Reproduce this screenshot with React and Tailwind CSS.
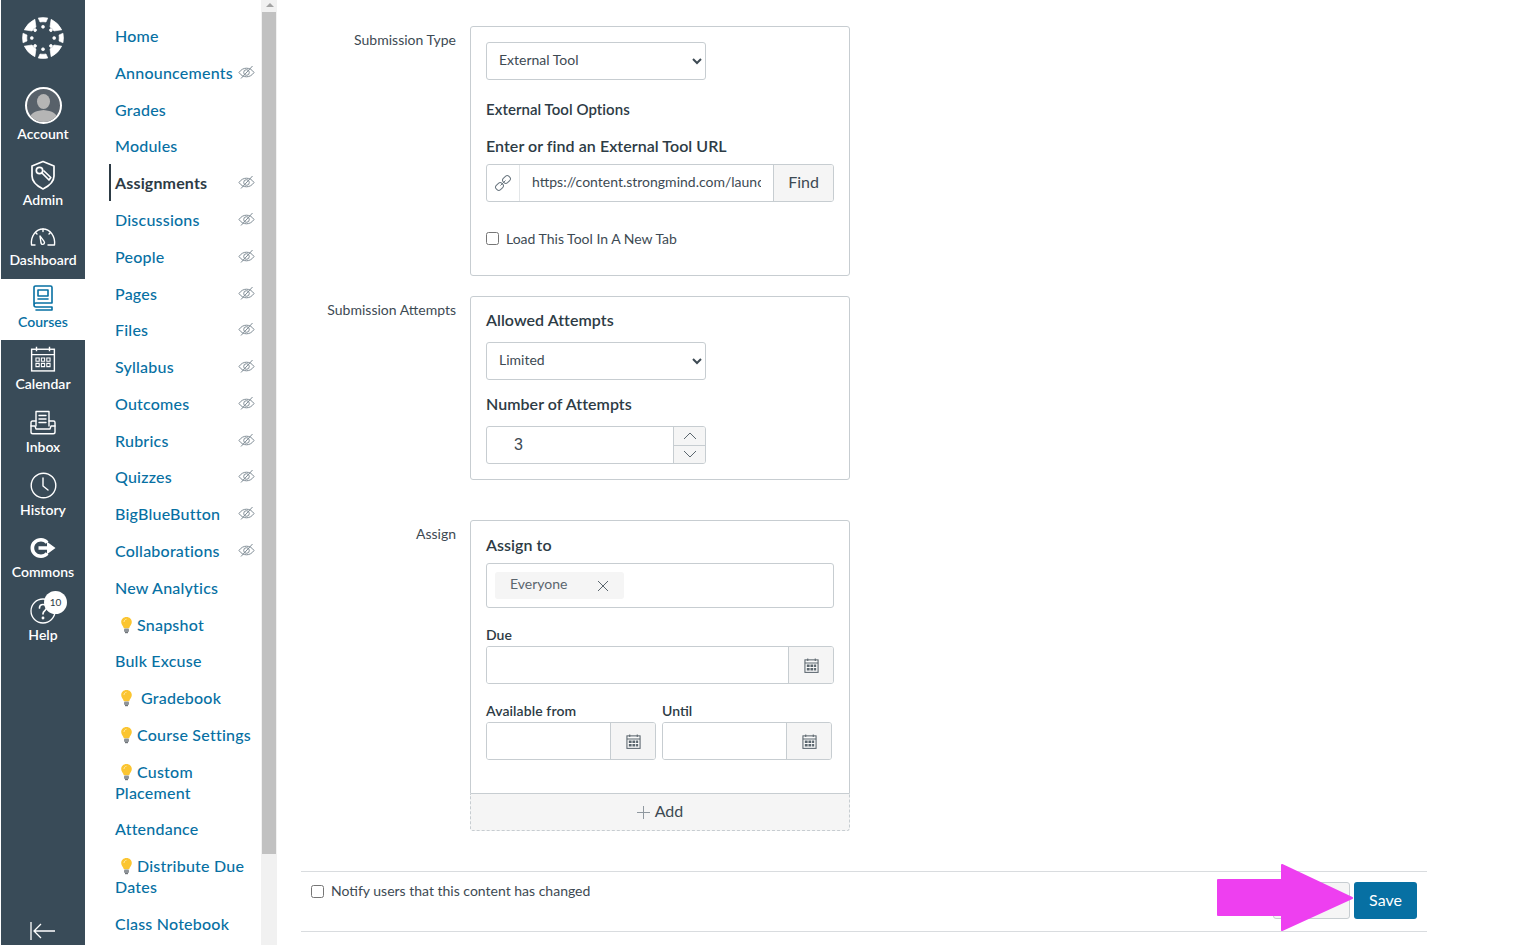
import React from 'react';

const navItems = [
  { label: 'Home' },
  { label: 'Announcements', hidden: true },
  { label: 'Grades' },
  { label: 'Modules' },
  { label: 'Assignments', hidden: true, active: true },
  { label: 'Discussions', hidden: true },
  { label: 'People', hidden: true },
  { label: 'Pages', hidden: true },
  { label: 'Files', hidden: true },
  { label: 'Syllabus', hidden: true },
  { label: 'Outcomes', hidden: true },
  { label: 'Rubrics', hidden: true },
  { label: 'Quizzes', hidden: true },
  { label: 'BigBlueButton', hidden: true },
  { label: 'Collaborations', hidden: true },
  { label: 'New Analytics' },
  { label: 'Snapshot', bulb: true },
  { label: 'Bulk Excuse' },
  { label: 'Gradebook', bulb: true, wide: true },
  { label: 'Course Settings', bulb: true },
  { label: 'Custom', second: 'Placement', bulb: true },
  { label: 'Attendance' },
  { label: 'Distribute Due', second: 'Dates', bulb: true },
  { label: 'Class Notebook' },
];

const EyeOff = () => (
  <svg width="17" height="17" viewBox="0 0 17 17" fill="none" stroke="#7f8c95" strokeWidth="1" className="shrink-0 mt-[2px]">
    <path d="M1 8.500C3 5.600 5.600 4.200 8.500 4.200S14 5.600 16 8.500C14 11.400 11.400 12.800 8.500 12.800S3 11.400 1 8.500Z" />
    <circle cx="8.500" cy="8.500" r="2.800" />
    <path d="M3 14.500 14.500 2" />
  </svg>
);

const Bulb = () => (
  <svg width="13" height="18" viewBox="0 0 13 18" className="inline-block align-[-3px]">
    <path d="M6.500 1C3.400 1 1.200 3.200 1.200 6c0 2.500 2 3.800 2.600 6.300h5.400C9.800 9.800 11.800 8.500 11.800 6c0-2.800-2.200-5-5.300-5Z" fill="#fbc531" />
    <path d="M4 6c0-1.500 1-2.500 2.500-2.800" stroke="#ffe9a3" strokeWidth="1" fill="none" />
    <rect x="4" y="12.500" width="5" height="3.500" rx="1" fill="#8f9499" />
    <rect x="5" y="16" width="3" height="1.200" fill="#6f7479" />
  </svg>
);

const CanvasLogo = () => (
  <svg width="44" height="44" viewBox="0 0 44 44" fill="#fff" stroke="#fff" strokeWidth=".6" strokeLinejoin="round">
    {[0, 45, 90, 135, 180, 225, 270, 315].map((a) => (
      <g key={a} transform={`rotate(${a} 22 22)`}>
        {a % 90 === 0 ? (
          <path d="M17.200 2Q22 1 26.800 2L25 6Q22 5.500 19 6Z" />
        ) : (
          <path d="M14.500 3Q22 .4 29.500 3L24.800 9.300Q22 8.500 19.200 9.300Z" />
        )}
        <circle cx="22" cy="10.800" r="1.500" />
      </g>
    ))}
  </svg>
);

const Avatar = () => (
  <div className="w-[37px] h-[37px] rounded-full border-2 border-white bg-[#58616a] overflow-hidden">
    <svg viewBox="0 0 33 33" className="w-full h-full">
      <ellipse cx="16.500" cy="12.500" rx="6.500" ry="7.500" fill="#b5b5b5" />
      <path d="M2 33c0-9 6-11 14.500-12C25 22 31 24 31 33Z" fill="#b5b5b5" />
    </svg>
  </div>
);

const stroke = { fill: 'none', stroke: 'currentColor', strokeWidth: 1.400, strokeLinecap: 'round', strokeLinejoin: 'round' };

const AdminIcon = () => (
  <svg width="26" height="30" viewBox="0 0 26 30" {...stroke} strokeWidth="1.700">
    <path d="M13 1.500 24 6v10c0 6-5 10-11 13C7 26 2 22 2 16V6Z" />
    <circle cx="9.500" cy="10.500" r="3.200" />
    <path d="M12 13l7 7 1.800-2.500L14 11" />
  </svg>
);
const DashboardIcon = () => (
  <svg width="28" height="20" viewBox="0 0 28 20" {...stroke}>
    <path d="M6 18H2.500C1.500 9 7 2 14 2s12.500 7 11.500 16H19" />
    <path d="M11 9l1 7c.5 2 3.500 1.800 3.500-.5 0-1-.8-1.800-4.500-6.500Z" />
    <path d="M14 2v2.500M6.500 5.500l1.500 1.500M21.500 5.500 20 7" />
  </svg>
);
const CoursesIcon = () => (
  <svg width="22" height="26" viewBox="0 0 22 26" {...stroke} strokeWidth="1.600">
    <path d="M2 20V2.500C2 1.600 2.600 1 3.500 1h15c.9 0 1.500.6 1.500 1.500V18H4c-1.200 0-2 .9-2 2s.8 2 2 2h16v3H4" />
    <rect x="6" y="5" width="10" height="6" />
    <path d="M6 14h10" />
  </svg>
);
const RailCalendarIcon = () => (
  <svg width="26" height="26" viewBox="0 0 24 24" {...stroke} strokeLinecap="butt" strokeLinejoin="miter" strokeWidth="1.300">
    <rect x="1.500" y="3" width="21" height="20" />
    <path d="M1.500 8h21M6 .8v4M18 .8v4" />
    <path strokeWidth="1" d="M5.500 11h3v3h-3ZM10.500 11h3v3h-3ZM15.500 11h3v3h-3ZM5.500 16h3v3h-3ZM10.500 16h3v3h-3ZM15.500 16h3v3h-3Z" />
  </svg>
);
const FieldCalendarIcon = () => (
  <svg width="15" height="15" viewBox="0 0 24 24" fill="none" stroke="currentColor" strokeWidth="1.700">
    <rect x="1.500" y="3" width="21" height="20" fill="#fafafa" />
    <path d="M1.500 8h21M6 .8v4M18 .8v4" />
    <path strokeWidth="4" strokeDasharray="4.500 1.300" d="M4.500 12.500h15M4.500 18h15" />
  </svg>
);
const InboxIcon = () => (
  <svg width="26" height="26" viewBox="0 0 26 26" {...stroke}>
    <path d="M6 16V1.500h13V16" />
    <path d="M9 5.500h7M9 9h7M9 12.500h7" />
    <path d="M6 11H2.500C1.500 11 1 11.600 1 12.500V22c0 1 .8 1.800 1.800 1.800h20.400c1 0 1.800-.8 1.800-1.800v-9.500c0-.9-.5-1.500-1.500-1.500H19" />
    <path d="M1 16h4l1 3h14l1-3h4" />
  </svg>
);
const HistoryIcon = () => (
  <svg width="27" height="27" viewBox="0 0 27 27" {...stroke}>
    <circle cx="13.500" cy="13.500" r="12.300" />
    <path d="M13 6v8l5 4" />
  </svg>
);
const CommonsIcon = () => (
  <svg width="26" height="20" viewBox="0 0 26 20" fill="currentColor">
    <path d="M11 0C5 0 .5 4.400.5 10S5 20 11 20c3 0 5.800-1.300 7.500-3.500l-2.700-2.200C14.400 15.800 12.800 16.500 11 16.500 7.200 16.500 4.200 13.600 4.200 10S7.200 3.500 11 3.500c1.800 0 3.400.7 4.800 2.200l2.700-2.200C16.800 1.300 14 0 11 0Z" />
    <path d="M8.500 8.300h8.500V3.800L25.500 10 17 16.200v-4.500H8.500Z" />
  </svg>
);
const HelpIcon = () => (
  <svg width="26" height="26" viewBox="0 0 26 26" {...stroke} strokeWidth="1.300">
    <circle cx="13" cy="13" r="12" />
    <path d="M9.500 10c0-2.300 1.600-3.500 3.500-3.500s3.500 1.300 3.500 3.300c0 3-3.500 2.800-3.500 6" strokeWidth="1.700" />
    <circle cx="13" cy="20" r=".8" fill="currentColor" />
  </svg>
);

const RailItem = ({ icon, label, current, badge, size = 'h-[62.600px]', iconCls = '', pad = 'pb-[9px]' }) => (
  <div className={`relative flex flex-col items-center justify-end ${pad} ${size} ${current ? 'bg-white text-[#0770a3]' : 'text-white'}`}>
    <div className={`h-[32px] flex items-center justify-center relative ${iconCls}`}>
      {icon}
      {badge && (
        <span className="absolute -top-[4px] left-[14px] w-[23px] h-[23px] rounded-full bg-white text-[#2d3b45] text-[10px] flex items-center justify-center">
          {badge}
        </span>
      )}
    </div>
    <span className="text-[14px] leading-[18px] -mt-px font-semibold">{label}</span>
  </div>
);

const Rail = () => (
  <aside className="ml-px w-[84px] shrink-0 bg-[#394b58] flex flex-col h-full">
    <div className="h-[86px] pt-[16px] flex justify-center">
      <CanvasLogo />
    </div>
    <RailItem icon={<Avatar />} label="Account" size="h-[66px]" iconCls="-translate-y-[5px]" />
    <RailItem icon={<AdminIcon />} label="Admin" size="h-[66px]" iconCls="-translate-y-px" />
    <RailItem icon={<DashboardIcon />} label="Dashboard" size="h-[61px]" pad="pb-[10px]" iconCls="translate-y-px" />
    <RailItem icon={<CoursesIcon />} label="Courses" size="h-[61px]" current />
    <RailItem icon={<RailCalendarIcon />} label="Calendar" size="h-[62px]" iconCls="translate-y-[-1px]" />
    <RailItem icon={<InboxIcon />} label="Inbox" size="h-[63.200px]" />
    <RailItem icon={<HistoryIcon />} label="History" />
    <RailItem icon={<CommonsIcon />} label="Commons" />
    <RailItem icon={<HelpIcon />} label="Help" badge="10" />
    <div className="mt-auto pb-[4px] flex justify-center text-white">
      <svg width="28" height="20" viewBox="0 0 28 20" fill="none" stroke="currentColor" strokeWidth="1.300">
        <path d="M2 1v18M26 10H5M12 3l-7 7 7 7" />
      </svg>
    </div>
  </aside>
);

const CourseNav = () => (
  <nav className="w-[176px] shrink-0 pt-[17.200px] pl-[24px] text-[16px] leading-[21px] tracking-[0.22px] font-medium overflow-hidden h-full">
    {navItems.map((item) => (
      <div
        key={item.label}
        className={`flex justify-between pl-[4px] pr-[6px] py-[7.900px] border-l-2 whitespace-nowrap ${
          item.active ? 'border-[#2d3b45] text-[#2d3b45] font-bold tracking-[0.15px]' : 'border-transparent text-[#0770a3]'
        }`}
      >
        <span>
          {item.bulb && (
            <span className={`inline-block w-[22px] pl-[5px] ${item.wide ? 'mr-[4px]' : ''}`}>
              <Bulb />
            </span>
          )}
          {item.label}
          {item.second && (
            <>
              <br />
              {item.second}
            </>
          )}
        </span>
        {item.hidden && <EyeOff />}
      </div>
    ))}
  </nav>
);

const Scrollbar = () => (
  <div className="w-[16px] shrink-0 h-full bg-[#f1f1f1] pl-px flex flex-col">
    <div className="h-[12px] flex justify-center pt-[3px]">
      <div className="w-0 h-0 border-x-[4px] border-x-transparent border-b-[4px] border-b-[#a3a3a3]" />
    </div>
    <div className="h-[842px] w-[14px] bg-[#c1c1c1]" />
  </div>
);

const Row = ({ label, children, className = '' }) => (
  <div className={`flex items-start ${className}`}>
    <div className="w-[155px] pt-[5px] text-right text-[14px] leading-[17px] text-[#3d4a53] shrink-0">{label}</div>
    <div className="ml-[14px] w-[380px]">{children}</div>
  </div>
);

const Box = ({ children, className = '' }) => (
  <div className={`border border-[#c7cdd1] rounded-[3px] px-[15px] ${className}`}>{children}</div>
);

const selectCls =
  'block w-[220px] h-[38px] bg-white border border-[#c7cdd1] rounded-[3px] pl-[8px] pr-[4px] pb-[3px] text-[14px] text-[#3d4a53]';
const headingCls = 'text-[16px] leading-[20px] font-semibold tracking-[0.05px] text-[#2d3b45]';

const DateField = ({ width }) => (
  <div className={`flex h-[38px] border border-[#c7cdd1] rounded-[3px] overflow-hidden ${width}`}>
    <input readOnly value="" className="flex-1 min-w-0 bg-white outline-none" />
    <div className="w-[45px] bg-[#f5f5f5] border-l border-[#c7cdd1] flex items-center justify-center text-[#5b666e]">
      <FieldCalendarIcon />
    </div>
  </div>
);

export default function App() {
  return (
    <div className="relative flex h-screen overflow-hidden bg-white font-['Lato',sans-serif] text-[#2d3b45]">
      <Rail />
      <CourseNav />
      <Scrollbar />
      <main className="flex-1 pl-[24px] pt-[26px]">
        <div className="w-[1126px]">
          <Row label="Submission Type">
            <Box className="h-[250px] pt-[15px]">
              <select defaultValue="External Tool" className={selectCls}>
                <option>External Tool</option>
              </select>
              <div className="mt-[19px] text-[15px] leading-[20px] font-semibold tracking-[0.05px]">External Tool Options</div>
              <div className={`mt-[17px] ${headingCls}`}>Enter or find an External Tool URL</div>
              <div className="mt-[8px] flex h-[38px] border border-[#c7cdd1] rounded-[3px] overflow-hidden">
                <div className="w-[33px] border-r border-[#e3e6e8] flex items-center justify-center text-[#6b7780]">
                  <svg width="18" height="18" viewBox="0 0 18 18" fill="none" stroke="currentColor" strokeWidth="1">
                    <rect x="9.500" y="1.500" width="6" height="8" rx="2.500" transform="rotate(45 12.500 5.500)" />
                    <rect x="2.500" y="8.500" width="6" height="8" rx="2.500" transform="rotate(45 5.500 12.500)" />
                    <path d="M6.500 11.500l5-5" />
                  </svg>
                </div>
                <input
                  readOnly
                  value="https://content.strongmind.com/launch"
                  className="flex-1 min-w-0 mx-[12px] pb-[3px] text-[14px] text-[#3d4a53] outline-none"
                />
                <div className="w-[60px] bg-[#f5f5f5] border-l border-[#c7cdd1] flex items-center justify-center pb-[2px] text-[16px] text-[#3d4a53]">
                  Find
                </div>
              </div>
              <label className="mt-[28px] flex items-center text-[14px] leading-[17px] text-[#3d4a53]">
                <input type="checkbox" className="w-[13px] h-[13px] mr-[7px]" />
                Load This Tool In A New Tab
              </label>
            </Box>
          </Row>

          <Row label="Submission Attempts" className="mt-[20px]">
            <Box className="h-[184px] pt-[13px]">
              <div className={headingCls}>Allowed Attempts</div>
              <select defaultValue="Limited" className={`mt-[12px] ${selectCls}`}>
                <option>Limited</option>
              </select>
              <div className={`mt-[14px] ${headingCls}`}>Number of Attempts</div>
              <div className="mt-[12px] flex w-[220px] h-[38px] border border-[#c7cdd1] rounded-[3px] overflow-hidden">
                <input
                  readOnly
                  value="3"
                  className="flex-1 min-w-0 pl-[27px] text-[16px] font-['Liberation_Sans',sans-serif] text-[#3d4a53] outline-none"
                />
                <div className="w-[32px] bg-[#f5f5f5] border-l border-[#c7cdd1] flex flex-col text-[#5b666e]">
                  <div className="flex-1 flex items-center justify-center border-b border-[#c7cdd1]">
                    <svg width="14" height="8" viewBox="0 0 14 8" fill="none" stroke="currentColor"><path d="M1 7l6-6 6 6" /></svg>
                  </div>
                  <div className="flex-1 flex items-center justify-center">
                    <svg width="14" height="8" viewBox="0 0 14 8" fill="none" stroke="currentColor"><path d="M1 1l6 6 6-6" /></svg>
                  </div>
                </div>
              </div>
            </Box>
          </Row>

          <Row label="Assign" className="mt-[40px]">
            <div>
              <Box className="h-[274px] pt-[14px] rounded-b-none">
                <div className={headingCls}>Assign to</div>
                <div className="mt-[8px] h-[45px] border border-[#c7cdd1] rounded-[3px] flex items-center pl-[8px]">
                  <div className="w-[129px] h-[27px] bg-[#f5f5f5] rounded-[3px] flex items-center justify-between px-[15px] pb-[5px] text-[14px] text-[#5b666e]">
                    Everyone
                    <svg width="12" height="12" viewBox="0 0 12 12" fill="none" stroke="currentColor" className="mt-[5px]"><path d="M1 1l10 10M11 1 1 11" /></svg>
                  </div>
                </div>
                <div className="mt-[18px] text-[14px] leading-[17px] font-semibold">Due</div>
                <div className="mt-[3px]"><DateField width="w-[348px]" /></div>
                <div className="mt-[18px] flex gap-[6px]">
                  <div>
                    <div className="text-[14px] leading-[17px] font-semibold tracking-[0.1px] mb-[3px]">Available from</div>
                    <DateField width="w-[170px]" />
                  </div>
                  <div>
                    <div className="text-[14px] leading-[17px] font-semibold mb-[3px]">Until</div>
                    <DateField width="w-[170px]" />
                  </div>
                </div>
              </Box>
              <div className="h-[37px] pb-[2px] bg-[#f5f5f5] border border-t-0 border-dashed border-[#c7cdd1] rounded-b-[3px] flex items-center justify-center text-[16px] text-[#3d4a53]">
                <svg width="13" height="13" viewBox="0 0 13 13" fill="none" stroke="#8f989f" strokeWidth="1" className="mr-[5px] mt-[2px]"><path d="M6.500 0v13M0 6.500h13" /></svg>
                Add
              </div>
            </div>
          </Row>

          <div className="mt-[40px] h-[61px] border-y border-[#d9dcdf] flex items-start justify-between px-[10px]">
            <label className="mt-[10px] flex items-center text-[14px] leading-[17px] text-[#3d4a53]">
              <input type="checkbox" className="w-[13px] h-[13px] mr-[7px] mt-[2px]" />
              Notify users that this content has changed
            </label>
            <div className="mt-[10px] flex gap-[4px]">
              <div className="w-[77px] h-[37px] pb-[2px] bg-[#f5f5f5] border border-[#c7cdd1] rounded-[3px] flex items-center justify-center text-[16px]">Cancel</div>
              <div className="w-[63px] h-[37px] pb-[2px] bg-[#0770a3] rounded-[3px] flex items-center justify-center text-[16px] text-white">Save</div>
            </div>
          </div>
        </div>
      </main>
      <svg width="137" height="67" viewBox="0 0 137 67" className="absolute left-[1217px] top-[864px]">
        <path d="M1 16h64V1l70 33-70 32V51H1Z" fill="#ee3ff0" stroke="#ee3ff0" strokeWidth="2" strokeLinejoin="round" />
      </svg>
    </div>
  );
}
